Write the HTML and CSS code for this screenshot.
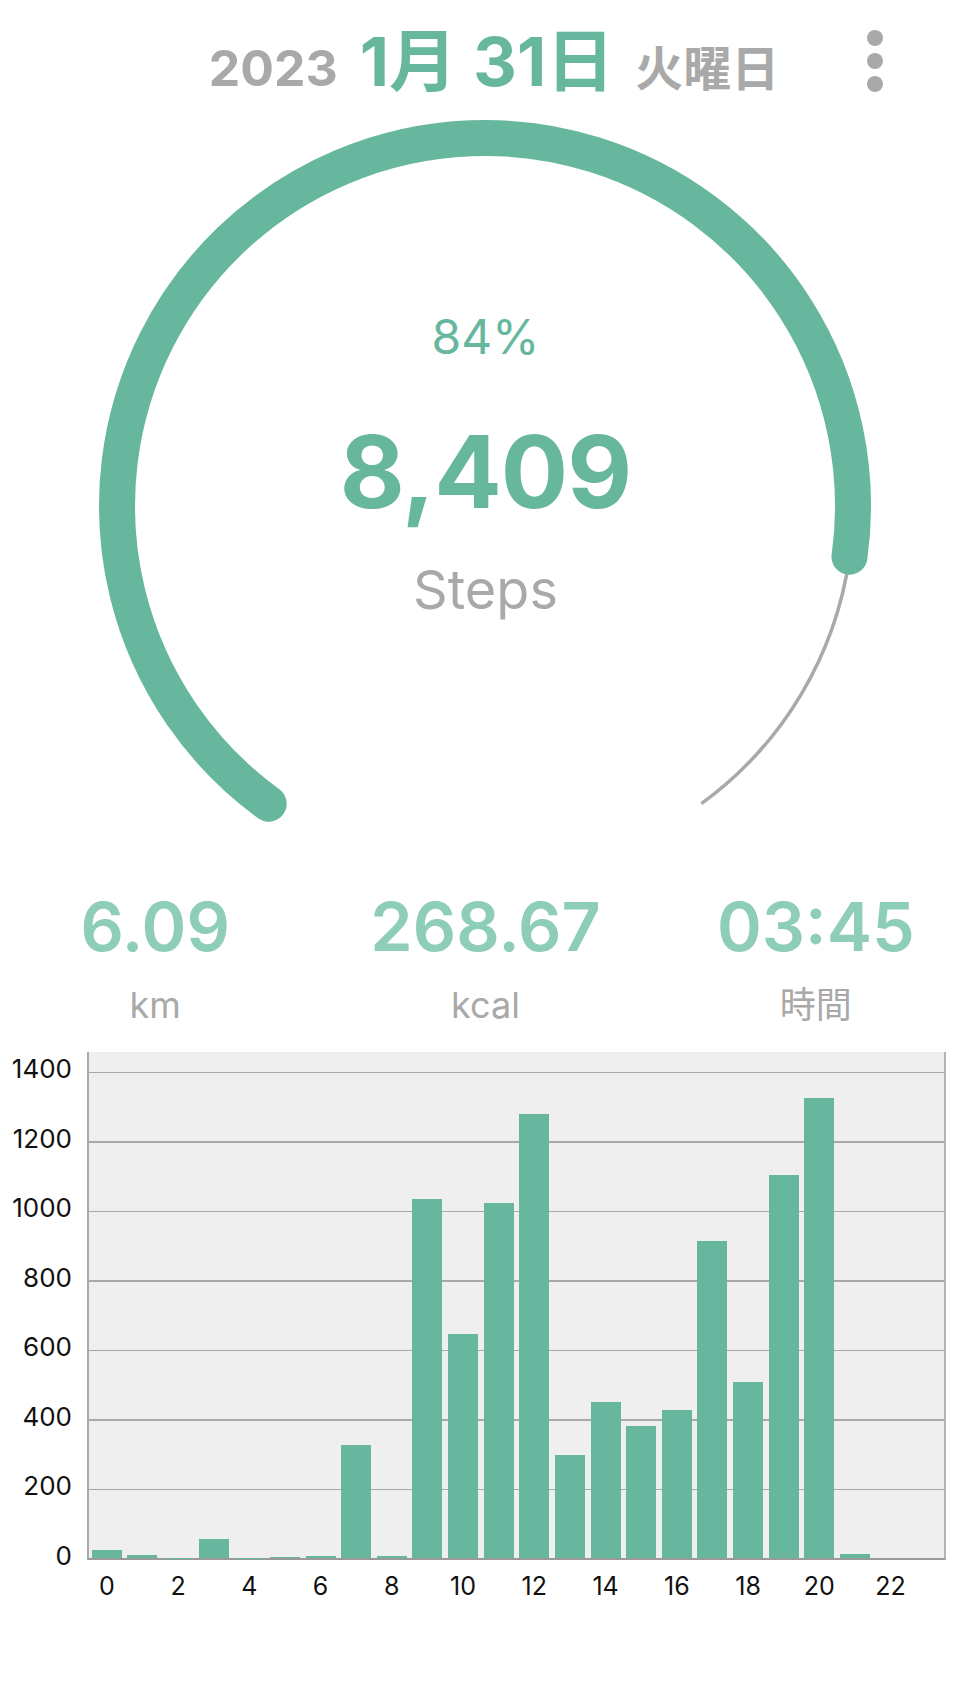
FILE: index.html
```html
<!DOCTYPE html>
<html lang="ja">
<head>
<meta charset="utf-8">
<title>歩数</title>
<link rel="stylesheet" href="styles.css">
</head>
<body>
<div class="app">
  <header class="date-bar">
    <span class="year">2023</span>
    <span class="md">1月 31日</span>
    <span class="wday">火曜日</span>
    <button class="kebab" aria-label="メニュー"><i></i><i></i><i></i></button>
  </header>

  <section class="gauge">
    <svg class="gauge-svg" viewBox="0 0 971 720" width="971" height="720" aria-hidden="true">
      <path class="track" d="M 849.5 446.7 A 368 368 0 0 1 701.3 693.7"/>
      <path class="progress" d="M 268.7 693.7 A 368 368 0 1 1 849.5 446.7"/>
    </svg>
    <div class="gauge-text">
      <div class="pct">84%</div>
      <div class="steps">8,409</div>
      <div class="unit">Steps</div>
    </div>
  </section>

  <section class="stats">
    <div class="stat"><div class="val">6.09</div><div class="lbl">km</div></div>
    <div class="stat"><div class="val">268.67</div><div class="lbl">kcal</div></div>
    <div class="stat"><div class="val">03:45</div><div class="lbl">時間</div></div>
  </section>

  <section class="chart">
    <div class="yaxis">
      <span>1400</span><span>1200</span><span>1000</span><span>800</span>
      <span>600</span><span>400</span><span>200</span><span>0</span>
    </div>
    <div class="plot">
      <div class="slot"><div class="bar" style="height:1.51%"></div></div>
      <div class="slot"><div class="bar" style="height:0.62%"></div></div>
      <div class="slot"><div class="bar" style="height:0.07%"></div></div>
      <div class="slot"><div class="bar" style="height:3.71%"></div></div>
      <div class="slot"><div class="bar" style="height:0.07%"></div></div>
      <div class="slot"><div class="bar" style="height:0.21%"></div></div>
      <div class="slot"><div class="bar" style="height:0.34%"></div></div>
      <div class="slot"><div class="bar" style="height:22.25%"></div></div>
      <div class="slot"><div class="bar" style="height:0.41%"></div></div>
      <div class="slot"><div class="bar" style="height:70.88%"></div></div>
      <div class="slot"><div class="bar" style="height:44.30%"></div></div>
      <div class="slot"><div class="bar" style="height:70.19%"></div></div>
      <div class="slot"><div class="bar" style="height:87.70%"></div></div>
      <div class="slot"><div class="bar" style="height:20.33%"></div></div>
      <div class="slot"><div class="bar" style="height:30.84%"></div></div>
      <div class="slot"><div class="bar" style="height:26.10%"></div></div>
      <div class="slot"><div class="bar" style="height:29.26%"></div></div>
      <div class="slot"><div class="bar" style="height:62.57%"></div></div>
      <div class="slot"><div class="bar" style="height:34.82%"></div></div>
      <div class="slot"><div class="bar" style="height:75.62%"></div></div>
      <div class="slot"><div class="bar" style="height:91.00%"></div></div>
      <div class="slot"><div class="bar" style="height:0.82%"></div></div>
      <div class="slot"><div class="bar" style="height:0%"></div></div>
      <div class="slot"><div class="bar" style="height:0%"></div></div>
    </div>
    <div class="xaxis">
      <span>0</span><span></span><span>2</span><span></span><span>4</span><span></span>
      <span>6</span><span></span><span>8</span><span></span><span>10</span><span></span>
      <span>12</span><span></span><span>14</span><span></span><span>16</span><span></span>
      <span>18</span><span></span><span>20</span><span></span><span>22</span><span></span>
    </div>
  </section>
</div>
</body>
</html>
```

FILE: styles.css
```css
html, body {
  margin: 0;
  padding: 0;
  background: #ffffff;
  overflow-x: hidden;
}

body {
  font-family: "Inter", "Noto Sans CJK JP", sans-serif;
  color: #a9a9a9;
}

.app {
  width: 971px;
  min-height: 1687px;
}

/* ---------- header ---------- */
.date-bar {
  position: relative;
  display: flex;
  justify-content: center;
  align-items: baseline;
  height: 110px;
  box-sizing: border-box;
  padding-top: 27px;
  padding-left: 17px;
}

.year {
  font-size: 50px;
  line-height: 1;
  font-weight: 700;
  color: #a9a9a9;
}

.md {
  font-size: 68px;
  line-height: 1;
  font-weight: 700;
  color: #67b79e;
  margin-left: 22px;
}

.wday {
  font-size: 48px;
  line-height: 1;
  font-weight: 700;
  color: #a9a9a9;
  margin-left: 21px;
}

.kebab {
  position: absolute;
  left: 867px;
  top: 30px;
  display: flex;
  flex-direction: column;
  gap: 7px;
  padding: 0;
  margin: 0;
  border: 0;
  background: none;
}

.kebab i {
  display: block;
  width: 16px;
  height: 16px;
  border-radius: 50%;
  background: #a9a9a9;
}

/* ---------- gauge ---------- */
.gauge {
  position: relative;
  height: 720px;
}

.gauge-svg {
  display: block;
}

.gauge-svg path {
  fill: none;
}

.gauge-svg .track {
  stroke: #a9a9a9;
  stroke-width: 3.5;
}

.gauge-svg .progress {
  stroke: #67b79e;
  stroke-width: 36;
  stroke-linecap: round;
}

.gauge-text {
  position: absolute;
  left: 0;
  right: 0;
  top: 0;
  display: flex;
  flex-direction: column;
  align-items: center;
  padding-top: 203px;
}

.pct {
  font-size: 48px;
  line-height: 1;
  font-weight: 400;
  color: #67b79e;
}

.steps {
  margin-top: 61px;
  font-size: 100px;
  line-height: 1;
  font-weight: 700;
  letter-spacing: -1px;
  color: #67b79e;
}

.unit {
  margin-top: 41px;
  font-size: 54px;
  line-height: 1;
  font-weight: 400;
  color: #a9a9a9;
}

/* ---------- stats ---------- */
.stats {
  display: grid;
  grid-template-columns: repeat(3, 1fr);
  margin: 0 -10px;
  padding-top: 62px;
}

.stat {
  display: flex;
  flex-direction: column;
  align-items: center;
}

.val {
  font-size: 68px;
  line-height: 1;
  font-weight: 600;
  color: #8ecdb9;
}

.lbl {
  margin-top: 27px;
  font-size: 36px;
  line-height: 1;
  font-weight: 400;
  color: #a9a9a9;
}

/* ---------- chart ---------- */
.chart {
  display: grid;
  grid-template-columns: 87px 859px;
  grid-template-rows: 508px auto;
  margin-top: 29px;
}

.yaxis {
  grid-column: 1;
  grid-row: 1;
  display: flex;
  flex-direction: column;
  align-items: flex-end;
  padding-right: 15px;
  margin-top: -18px;
}

.yaxis span {
  height: 69.5px;
  line-height: 69.5px;
  font-size: 26px;
  color: #111111;
}

.plot {
  grid-column: 2;
  grid-row: 1;
  box-sizing: border-box;
  height: 508px;
  display: flex;
  align-items: flex-end;
  border-left: 2px solid #a9a9a9;
  border-right: 2px solid #b3b3b3;
  border-bottom: 2px solid #9a9a9a;
  background-color: #efefef;
  background-image: repeating-linear-gradient(to top,
      transparent 0, transparent 68px,
      #a8a8a8 68px, #a8a8a8 69.5px);
}

.slot {
  flex: 1;
  height: 100%;
  display: flex;
  align-items: flex-end;
  justify-content: center;
}

.bar {
  width: 30px;
  background: #67b79e;
}

.xaxis {
  grid-column: 2;
  grid-row: 2;
  display: flex;
  padding: 0 2px;
  margin-top: 14px;
}

.xaxis span {
  flex: 1;
  text-align: center;
  font-size: 25px;
  line-height: 1;
  color: #111111;
}
```
